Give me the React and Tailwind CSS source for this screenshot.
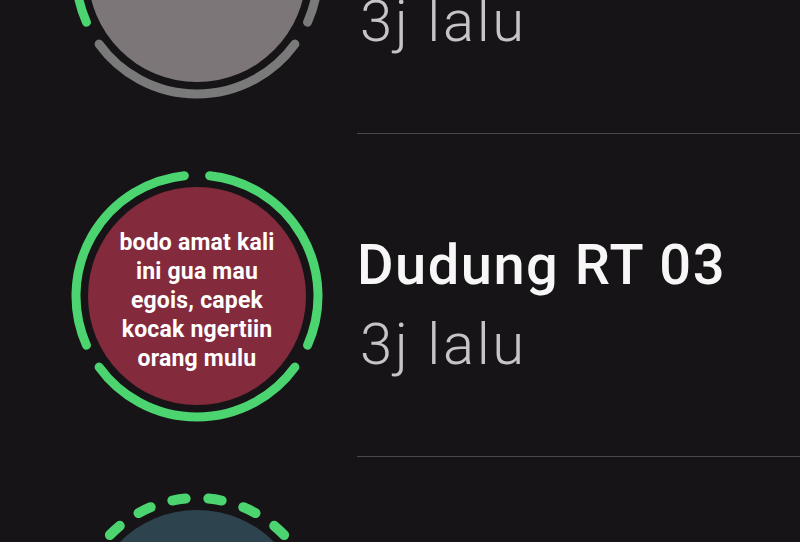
import React from "react";

const C = 126;
const R = 121;

function pt(a) {
  const rad = (a * Math.PI) / 180;
  return [C + R * Math.sin(rad), C - R * Math.cos(rad)];
}

function arc(a0, a1) {
  const [x0, y0] = pt(a0);
  const [x1, y1] = pt(a1);
  const large = a1 - a0 > 180 ? 1 : 0;
  return `M ${x0.toFixed(2)} ${y0.toFixed(2)} A ${R} ${R} 0 ${large} 1 ${x1.toFixed(2)} ${y1.toFixed(2)}`;
}

const GREEN = "#4bd470";
const GRAY = "#7b7a7b";

function SegRing({ colors }) {
  const gap = 12;
  return (
    <svg className="absolute inset-0" width="252" height="252" viewBox="0 0 252 252">
      {colors.map((c, i) => (
        <path
          key={i}
          d={arc(i * 120 + gap / 2, (i + 1) * 120 - gap / 2)}
          fill="none"
          stroke={c}
          strokeWidth="9"
          strokeLinecap="round"
        />
      ))}
    </svg>
  );
}

function DashRing() {
  const n = 21;
  const step = 360 / n;
  const len = 6.4;
  const items = [];
  for (let k = 0; k < n; k++) {
    const mid = step / 2 + k * step;
    items.push(
      <path
        key={k}
        d={arc(mid - len / 2, mid + len / 2)}
        fill="none"
        stroke={GREEN}
        strokeWidth="10"
        strokeLinecap="round"
      />
    );
  }
  return (
    <svg className="absolute inset-0" width="252" height="252" viewBox="0 0 252 252">
      {items}
    </svg>
  );
}

function Row({ ring, fill, children, name, time, last }) {
  return (
    <div className="flex h-[323px] items-center">
      <div className="relative ml-[71px] h-[252px] w-[252px] shrink-0 p-[17px]">
        {ring}
        <div className={`flex h-[218px] w-[218px] items-center justify-center rounded-full ${fill}`}>
          {children}
        </div>
      </div>
      <div
        className={`ml-[34px] flex flex-1 flex-col justify-center self-stretch pt-[20px] ${
          last ? "" : "border-b-[1.5px] border-[#4d4848]"
        }`}
      >
        <div className="whitespace-nowrap text-[56px] font-medium leading-[64px] tracking-[1.5px] text-[#f7f7f7] [font-family:Roboto,'Liberation_Sans',sans-serif]">
          {name}
        </div>
        <div className="mt-[14px] whitespace-nowrap pl-[3px] text-[58px] font-light leading-[66px] tracking-[2.6px] text-[#c6c5c6] [font-family:Roboto,'Liberation_Sans',sans-serif]">
          {time}
        </div>
      </div>
    </div>
  );
}

export default function App() {
  return (
    <div className="h-[542px] w-full overflow-hidden bg-[#161416]">
      <div className="-mt-[189px] flex flex-col">
        <Row
          ring={<SegRing colors={[GRAY, GRAY, GREEN]} />}
          fill="bg-[#7d7679]"
          name="Pak Ujang"
          time="3j lalu"
        />
        <Row
          ring={<SegRing colors={[GREEN, GREEN, GREEN]} />}
          fill="bg-[#832a3d]"
          name="Dudung RT 03"
          time="3j lalu"
        >
          <div className="mt-[10px] text-center text-[23px] font-bold leading-[29px] tracking-[0.2px] text-white [font-family:Roboto,'Liberation_Sans',sans-serif]">
            bodo amat kali
            <br />
            ini gua mau
            <br />
            egois, capek
            <br />
            kocak ngertiin
            <br />
            orang mulu
          </div>
        </Row>
        <Row
          ring={<DashRing />}
          fill="bg-[#2d434e]"
          name="Mang Asep"
          time="4j lalu"
          last
        />
      </div>
    </div>
  );
}
